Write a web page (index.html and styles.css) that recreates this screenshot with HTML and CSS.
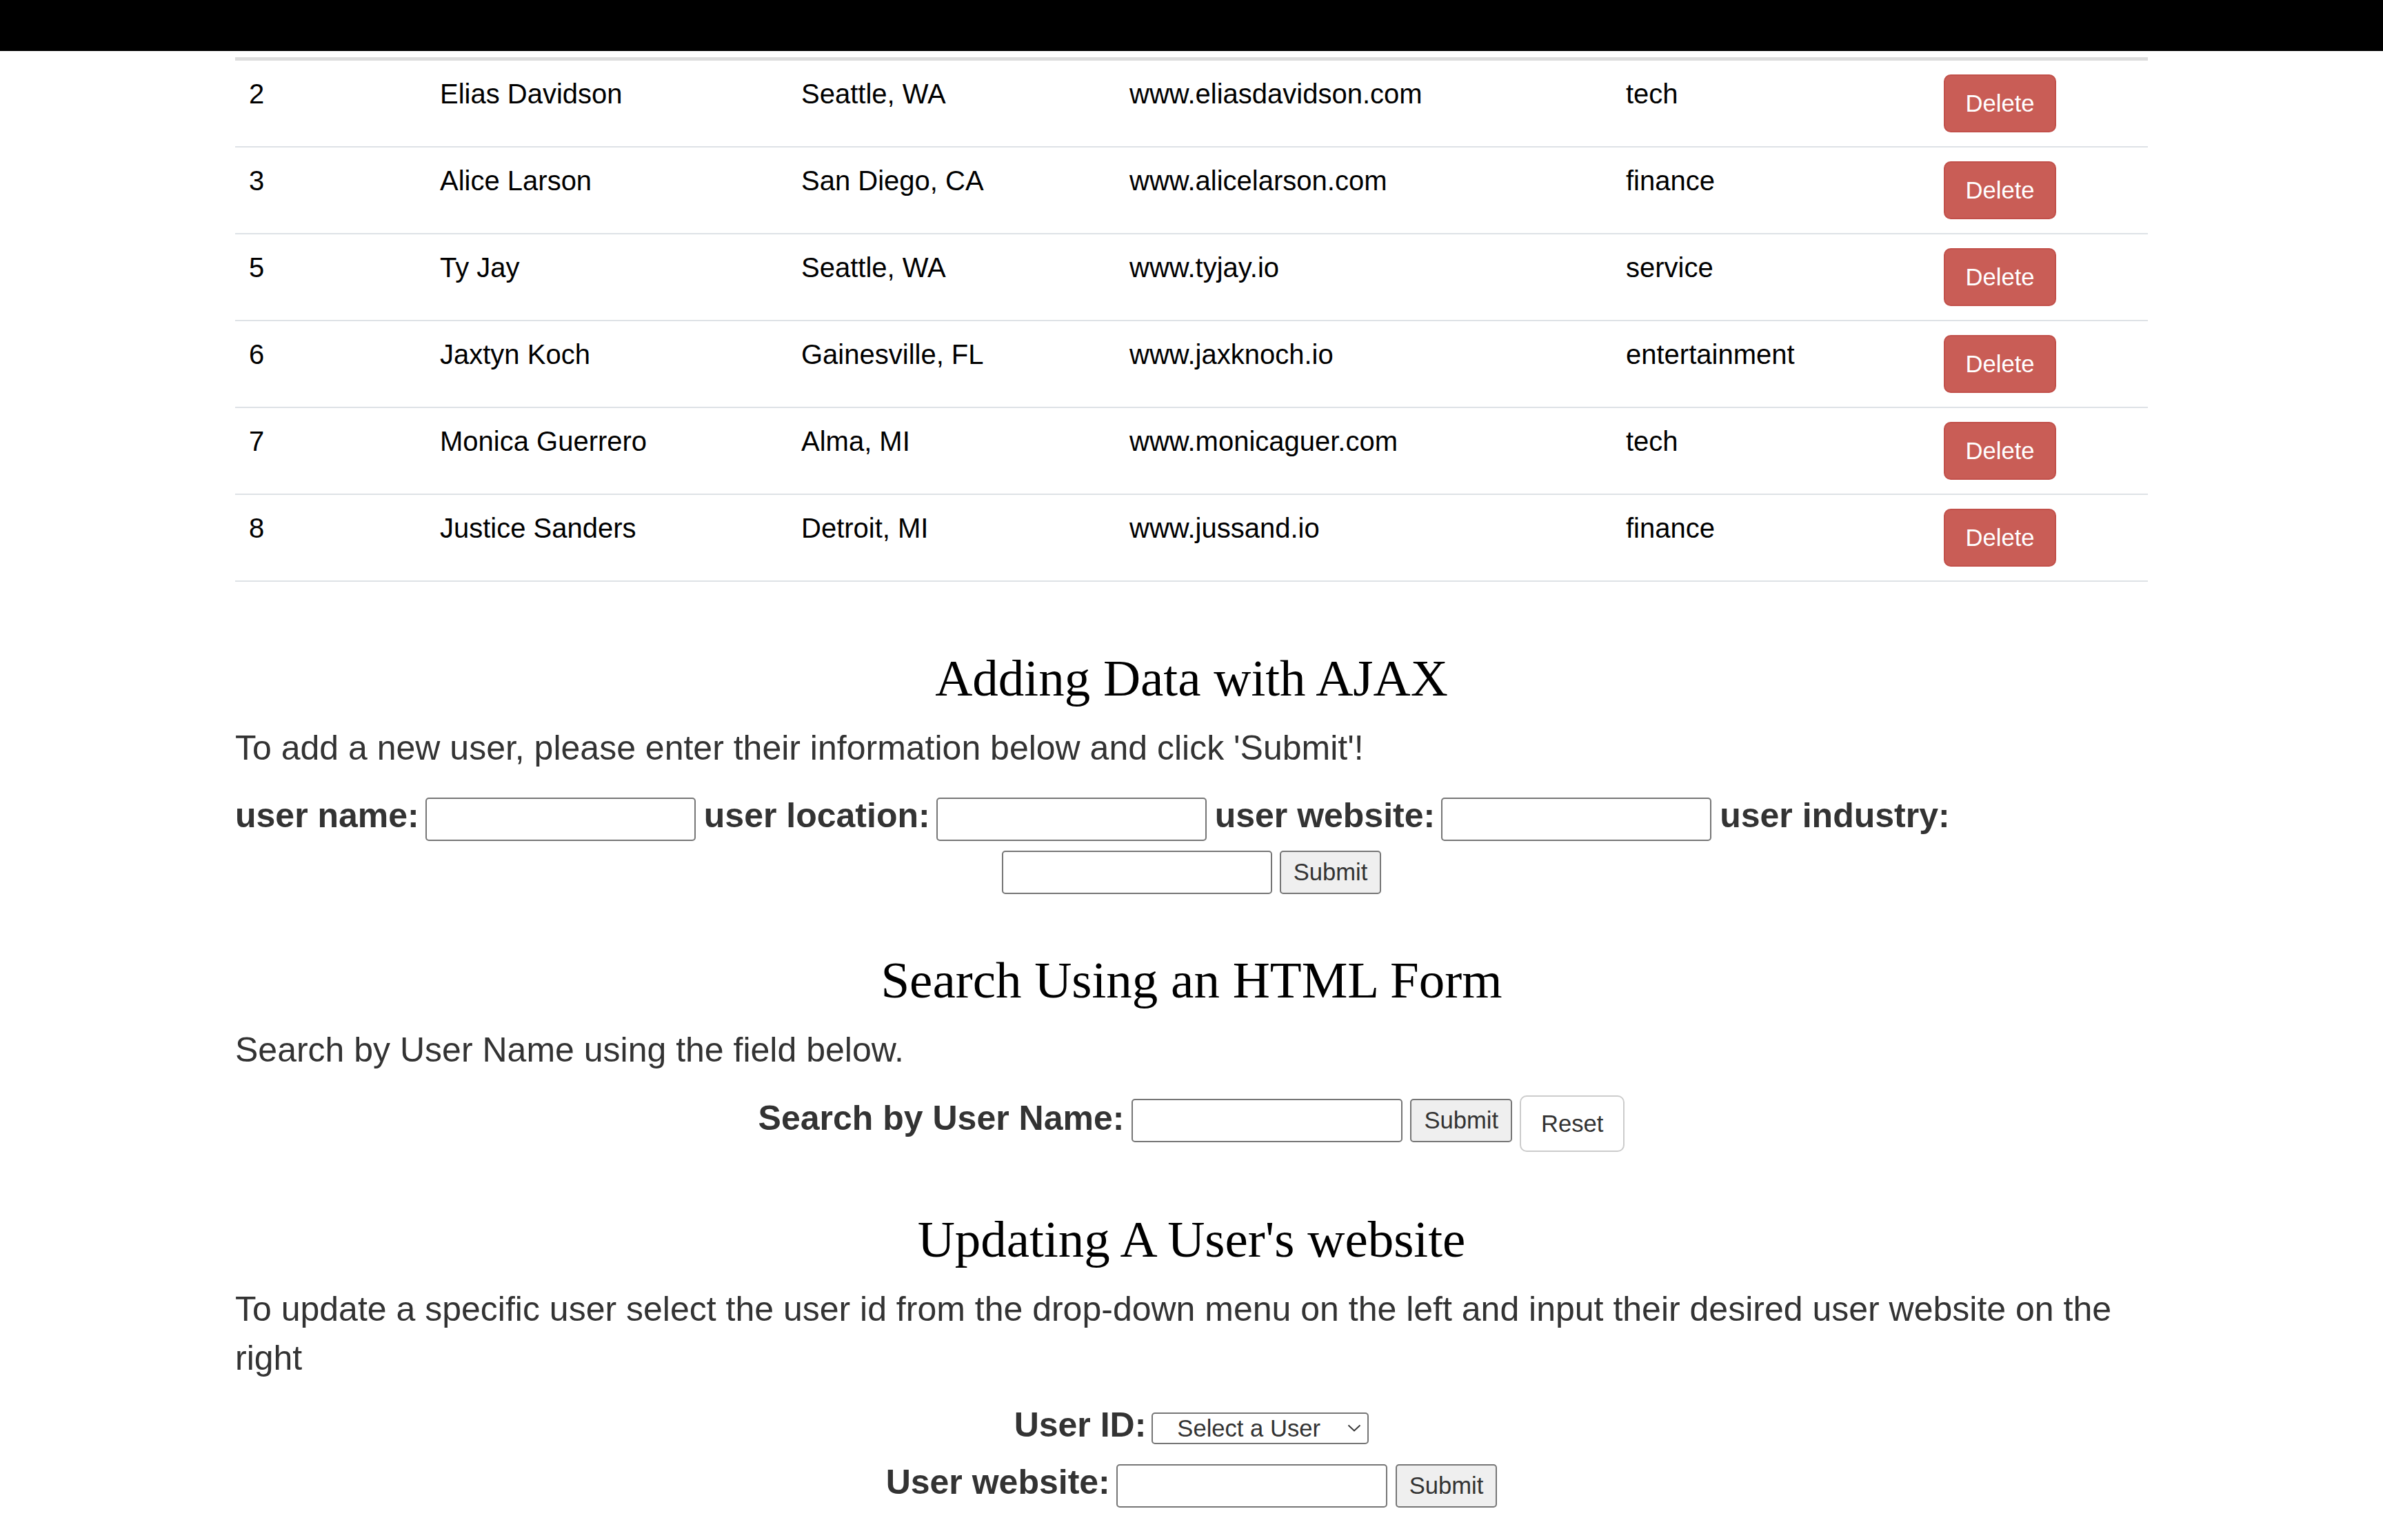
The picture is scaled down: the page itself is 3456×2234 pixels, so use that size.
FILE: index.html
```html
<!DOCTYPE html>
<html lang="en">
<head>
<meta charset="utf-8">
<title>Users</title>
<link rel="stylesheet" href="styles.css">
</head>
<body>
<div class="topbar"></div>
<main class="container">
  <table class="users">
    <colgroup>
      <col class="c-id"><col class="c-name"><col class="c-loc"><col class="c-web"><col class="c-ind"><col class="c-act">
    </colgroup>
    <tbody>
      <tr><td>2</td><td>Elias Davidson</td><td>Seattle, WA</td><td>www.eliasdavidson.com</td><td>tech</td><td><button class="btn-delete">Delete</button></td></tr>
      <tr><td>3</td><td>Alice Larson</td><td>San Diego, CA</td><td>www.alicelarson.com</td><td>finance</td><td><button class="btn-delete">Delete</button></td></tr>
      <tr><td>5</td><td>Ty Jay</td><td>Seattle, WA</td><td>www.tyjay.io</td><td>service</td><td><button class="btn-delete">Delete</button></td></tr>
      <tr><td>6</td><td>Jaxtyn Koch</td><td>Gainesville, FL</td><td>www.jaxknoch.io</td><td>entertainment</td><td><button class="btn-delete">Delete</button></td></tr>
      <tr><td>7</td><td>Monica Guerrero</td><td>Alma, MI</td><td>www.monicaguer.com</td><td>tech</td><td><button class="btn-delete">Delete</button></td></tr>
      <tr><td>8</td><td>Justice Sanders</td><td>Detroit, MI</td><td>www.jussand.io</td><td>finance</td><td><button class="btn-delete">Delete</button></td></tr>
    </tbody>
  </table>

  <section class="block block-add">
    <h2 class="title">Adding Data with AJAX</h2>
    <p class="intro">To add a new user, please enter their information below and click 'Submit'!</p>
    <form class="add-form">
      <div class="row row-left row-first">
        <label class="lbl">user name:</label><input type="text" class="field">
        <label class="lbl">user location:</label><input type="text" class="field">
        <label class="lbl">user website:</label><input type="text" class="field">
        <label class="lbl">user industry:</label>
      </div>
      <div class="row row-center row-second">
        <input type="text" class="field"><button type="button" class="btn-plain">Submit</button>
      </div>
    </form>
  </section>

  <section class="block block-search">
    <h2 class="title">Search Using an HTML Form</h2>
    <p class="intro">Search by User Name using the field below.</p>
    <form class="row row-center row-search">
      <label class="lbl lbl-search">Search by User Name:</label>
      <input type="text" class="field field-search">
      <button type="button" class="btn-plain btn-search">Submit</button>
      <button type="button" class="btn-reset">Reset</button>
    </form>
  </section>

  <section class="block block-update">
    <h2 class="title">Updating A User's website</h2>
    <p class="intro">To update a specific user select the user id from the drop-down menu on the left and input their desired user website on the right</p>
    <form class="update-form">
      <div class="row row-center row-uid">
        <label class="lbl">User ID:</label>
        <span class="select-wrap">
          <select class="select"><option>Select a User</option></select>
          <svg class="chev" width="20" height="11" viewBox="0 0 20 11"><path d="M1.5 1.5 L10 9.5 L18.5 1.5" fill="none" stroke="#333" stroke-width="1.8"/></svg>
        </span>
      </div>
      <div class="row row-center row-web">
        <label class="lbl">User website:</label>
        <input type="text" class="field">
        <button type="button" class="btn-plain">Submit</button>
      </div>
    </form>
  </section>
</main>
</body>
</html>
```

FILE: styles.css
```css
html, body {
  margin: 0;
  padding: 0;
  background: #fff;
}

body {
  font-family: "Liberation Sans", Arial, Helvetica, sans-serif;
  color: #333;
}

.topbar {
  height: 74px;
  background: #000;
}

.container {
  width: 2774px;
  margin: 0 auto;
}

/* ---------- table ---------- */
.users {
  width: 100%;
  border-collapse: separate;
  border-spacing: 0;
  table-layout: fixed;
  margin-top: 9px;
  border-top: 5px solid #dddddd;
  font-size: 40px;
  line-height: 56.4px;
  color: #000;
}

.c-id { width: 277px; }
.c-name { width: 524px; }
.c-loc { width: 476px; }
.c-web { width: 720px; }
.c-ind { width: 461px; }
.c-act { width: 316px; }

.users td {
  padding: 20px;
  vertical-align: top;
  border-bottom: 2px solid #dee2e6;
  white-space: nowrap;
}

.btn-delete {
  display: block;
  width: 163px;
  height: 84px;
  padding: 0;
  margin: 0;
  font-family: "Liberation Sans", Arial, sans-serif;
  font-size: 34.6px;
  color: #fff;
  background: #c95d56;
  border: 2px solid #c2504a;
  border-radius: 10px;
  text-align: center;
}

/* ---------- sections ---------- */
.block-add { margin-top: 99px; }
.block-search { margin-top: 84px; }
.block-update { margin-top: 86px; }

.title {
  font-family: "Liberation Serif", "Times New Roman", serif;
  font-size: 75px;
  font-weight: normal;
  line-height: 82px;
  margin: 0 0 25px;
  text-align: center;
  color: #000;
}

.intro {
  font-size: 50px;
  line-height: 70.6px;
  margin: 0 0 25px;
}

.add-form,
.update-form {
  display: flow-root;
}

.row {
  display: flex;
  align-items: flex-start;
  column-gap: 12px;
}

.row-left { justify-content: flex-start; }
.row-center { justify-content: center; }

.row-first { margin-top: 11px; }
.row-second { margin-top: 14px; column-gap: 11px; }

.lbl {
  font-size: 50px;
  font-weight: bold;
  line-height: 1;
  margin-top: 1px;
  margin-right: -3px;
  color: #333;
  white-space: nowrap;
}

.field {
  box-sizing: border-box;
  width: 392px;
  height: 63px;
  margin: 0;
  padding: 0 5px;
  font-family: "Liberation Sans", Arial, sans-serif;
  font-size: 33px;
  border: 2px solid #767676;
  border-radius: 5px;
  background: #fff;
}

.btn-plain {
  box-sizing: border-box;
  height: 63px;
  margin: 0;
  padding: 0 18px;
  font-family: "Liberation Sans", Arial, sans-serif;
  font-size: 34.6px;
  color: #333;
  background: #efefef;
  border: 2px solid #767676;
  border-radius: 5px;
}

/* search row */
.row-search {
  margin-top: 31px;
  column-gap: 11px;
}

.lbl-search {
  margin-top: 8px;
  margin-right: 0;
}

.field-search,
.btn-search {
  margin-top: 5px;
}

.field-search { width: 393px; }

.btn-reset {
  box-sizing: border-box;
  height: 82px;
  margin: 0;
  padding: 0 29px;
  font-family: "Liberation Sans", Arial, sans-serif;
  font-size: 34.6px;
  color: #333;
  background: #fff;
  border: 2px solid #cccccc;
  border-radius: 10px;
}

/* update rows */
.row-uid {
  margin-top: 11px;
  column-gap: 11px;
}

.select-wrap {
  position: relative;
  display: block;
  margin-top: 8px;
}

.select {
  box-sizing: border-box;
  display: block;
  width: 315px;
  height: 46px;
  margin: 0;
  padding: 0 0 0 35px;
  font-family: "Liberation Sans", Arial, sans-serif;
  font-size: 34.6px;
  color: #333;
  background: #fff;
  border: 2px solid #767676;
  border-radius: 5px;
  -webkit-appearance: none;
  appearance: none;
}

.chev {
  position: absolute;
  left: 284px;
  top: 17px;
  pointer-events: none;
}

.row-web {
  margin-top: 29px;
  column-gap: 12px;
}

.row-web .field { width: 393px; }
```
